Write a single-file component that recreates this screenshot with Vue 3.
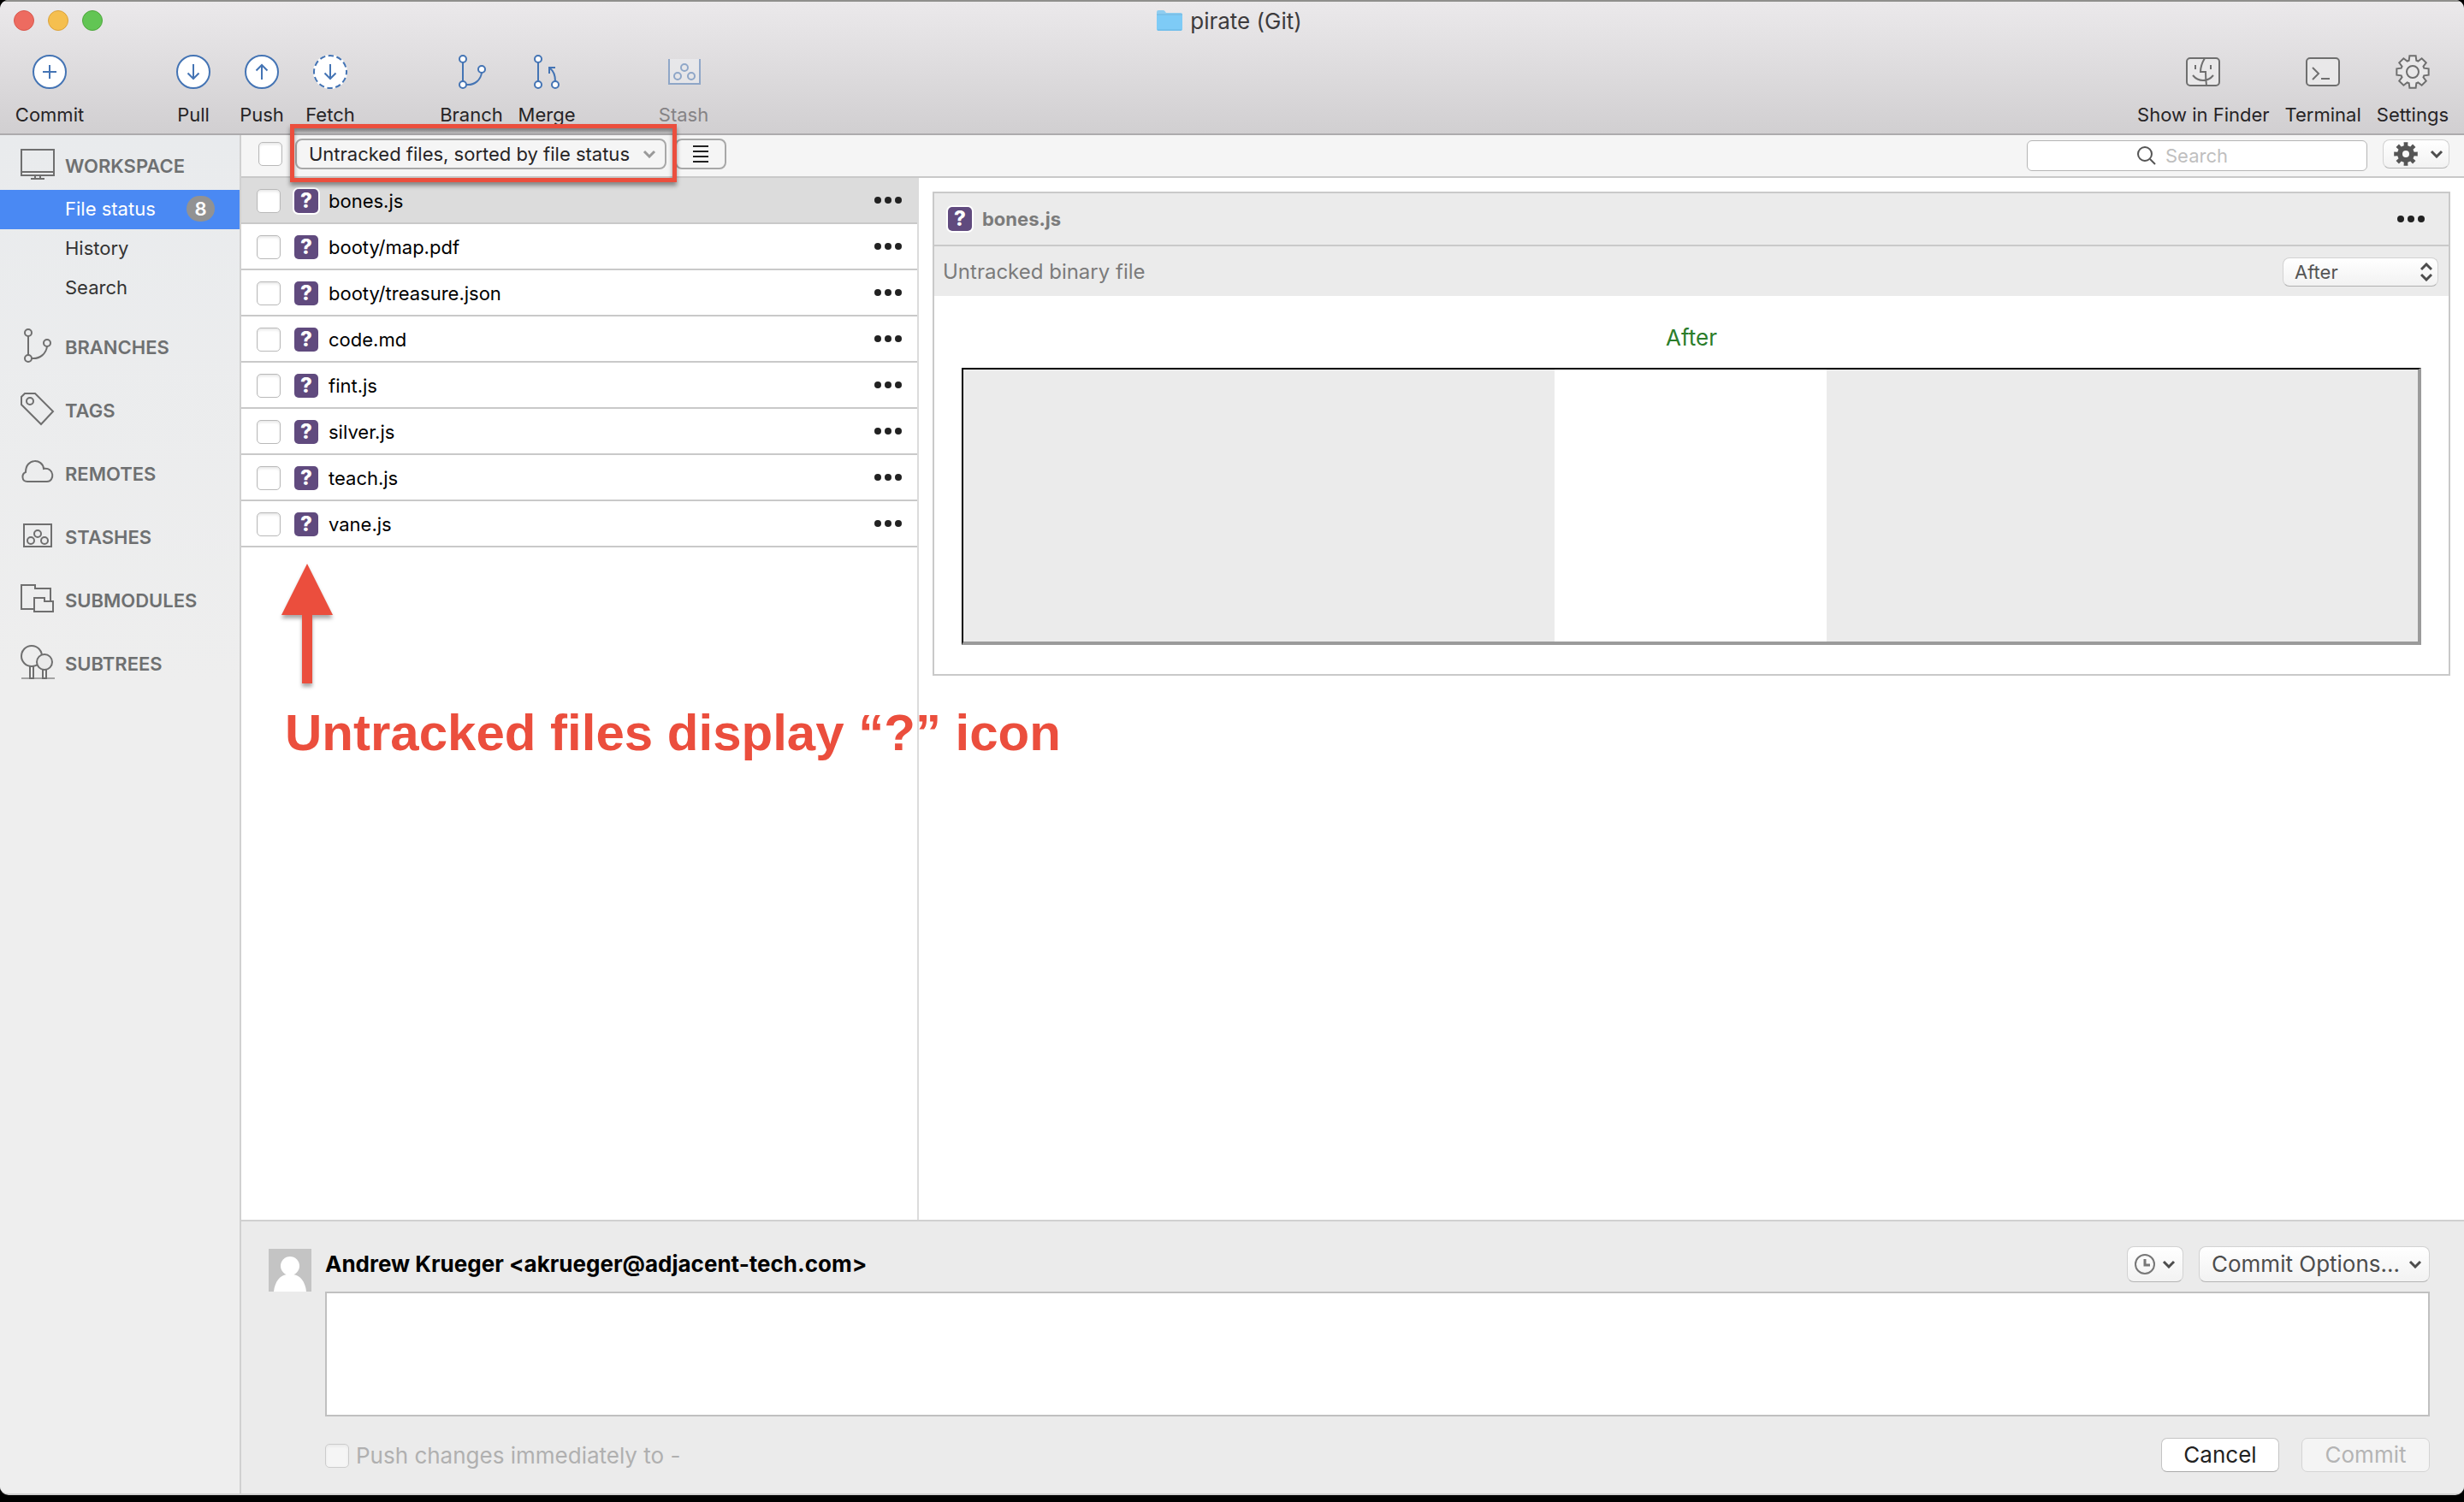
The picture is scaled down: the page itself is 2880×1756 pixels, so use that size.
<script setup>
import { ref } from 'vue'

const files = ref([
  'bones.js',
  'booty/map.pdf',
  'booty/treasure.json',
  'code.md',
  'fint.js',
  'silver.js',
  'teach.js',
  'vane.js',
].map((name) => ({ name, staged: false })))

const selected = ref('bones.js')
const allStaged = ref(false)
const query = ref('')
const message = ref('')

const sections = [
  { id: 'branches', label: 'BRANCHES' },
  { id: 'tags', label: 'TAGS' },
  { id: 'remotes', label: 'REMOTES' },
  { id: 'stashes', label: 'STASHES' },
  { id: 'submodules', label: 'SUBMODULES' },
  { id: 'subtrees', label: 'SUBTREES' },
]

// Outline of an eight-toothed gear centred on (c, c)
function gear(c, outer, inner, tip, root) {
  const points = []
  for (let i = 0; i < 8; i++) {
    const steps = [[inner, -root], [outer, -tip], [outer, tip], [inner, root]]
    for (const [r, offset] of steps) {
      const a = ((i * 45 + offset) * Math.PI) / 180
      points.push(`${(c + r * Math.sin(a)).toFixed(2)} ${(c - r * Math.cos(a)).toFixed(2)}`)
    }
  }
  return `M${points.join('L')}Z`
}
const outlineGear = gear(20, 19, 14, 11, 18)
const solidGear = gear(14, 14, 10, 10, 13)
</script>

<template>
  <div class="desktop">
    <div class="window">
      <header class="chrome">
        <div class="titlebar">
          <div class="lights">
            <button class="light close" aria-label="Close"></button>
            <button class="light minimise" aria-label="Minimise"></button>
            <button class="light zoom" aria-label="Zoom"></button>
          </div>
          <h1 class="title">
            <svg class="folder" width="30" height="26" viewBox="0 0 30 26">
              <path d="M0 2Q0 0 2 0H8Q9 0 11 3H28Q30 3 30 5V23H0Z" fill="#8fcdf0" />
              <path d="M0 6H30V22Q30 24 28 24H2Q0 24 0 22Z" fill="#7ecbf6" />
              <path d="M0 5H30M1 23H29" stroke="#68b4e0" fill="none" />
            </svg>
            pirate (Git)
          </h1>
        </div>

        <div class="toolbar">
          <div class="tools blue">
            <div class="group">
              <button class="tool">
                <svg class="icon" viewBox="0 0 40 40"><circle cx="20" cy="20" r="19" fill="#fff" /><path d="M20 12V28M12 20H28" /></svg>
                Commit
              </button>
            </div>
            <div class="group sync">
              <button class="tool">
                <svg class="icon" viewBox="0 0 40 40"><circle cx="20" cy="20" r="19" fill="#fff" /><path d="M20 11V28M13.500 21.500L20 28L26.500 21.500" /></svg>
                Pull
              </button>
              <button class="tool">
                <svg class="icon" viewBox="0 0 40 40"><circle cx="20" cy="20" r="19" fill="#fff" /><path d="M20 29V12M13.500 18.500L20 12L26.500 18.500" /></svg>
                Push
              </button>
              <button class="tool">
                <svg class="icon" viewBox="0 0 40 40"><circle cx="20" cy="20" r="20" fill="#fff" stroke="none" /><circle cx="20" cy="20" r="19" stroke-dasharray="6.500 3.450" stroke-dashoffset="3" /><path d="M20 11V28M13.500 21.500L20 28L26.500 21.500" /></svg>
                Fetch
              </button>
            </div>
            <div class="group flow">
              <button class="tool">
                <svg class="icon" viewBox="0 0 40 40"><path d="M10 9V31M14 35C24 36 31 29 32 21" /><g fill="#fff"><circle cx="10" cy="5" r="4" /><circle cx="10" cy="35" r="4" /><circle cx="32" cy="17" r="4" /></g></svg>
                Branch
              </button>
              <button class="tool">
                <svg class="icon" viewBox="0 0 40 40"><path d="M10 9V31M30 31C30 24 28 19 24 16M23 22V15H30" /><g fill="#fff"><circle cx="10" cy="5" r="4" /><circle cx="10" cy="35" r="4" /><circle cx="30" cy="35" r="4" /></g></svg>
                Merge
              </button>
            </div>
            <div class="group shelf">
              <button class="tool" disabled>
                <svg class="icon" viewBox="0 0 40 40"><path d="M3 5V34H39V5" fill="#f0f2f5" /><circle cx="21" cy="15" r="4" /><circle cx="13" cy="25" r="4" /><circle cx="29" cy="25" r="4" /></svg>
                Stash
              </button>
            </div>
          </div>
          <div class="tools end">
            <button class="tool">
              <svg class="icon" viewBox="0 0 40 40"><rect x="1" y="4" width="38" height="32" rx="4" fill="#e9e8e9" /><path d="M11 12V17M29 12V17M22 4C19 9 17 14 17 20H23Q23 28 24 36M8 24Q13 30 20 30T32 24" /></svg>
              Show in Finder
            </button>
            <button class="tool">
              <svg class="icon" viewBox="0 0 40 40"><rect x="1" y="4" width="38" height="32" rx="4" fill="#e9e8e9" /><path d="M8 15L15 22L8 29M18 28H28" /></svg>
              Terminal
            </button>
            <button class="tool">
              <svg class="icon" viewBox="0 0 40 40"><path :d="outlineGear" fill="#e9e8e9" /><circle cx="20" cy="20" r="7" /></svg>
              Settings
            </button>
          </div>
        </div>
      </header>

      <div class="body">
        <nav class="sidebar">
          <h2 class="section first">
            <svg class="icon" viewBox="0 0 40 40"><rect x="1" y="1" width="38" height="30" /><path d="M1 27H39M17 31V35M23 31V35M12 35H28" /></svg>
            WORKSPACE
          </h2>
          <a class="entry active" href="#status">File status <span class="badge">8</span></a>
          <a class="entry" href="#history">History</a>
          <a class="entry" href="#search">Search</a>
          <div class="sections">
            <h2 v-for="s in sections" :key="s.id" class="section">
              <svg class="icon" viewBox="0 0 40 40">
                <template v-if="s.id === 'branches'"><path d="M9 7V29M13 33C23 34 30 27 31 19" /><circle cx="9" cy="3" r="4" /><circle cx="9" cy="33" r="4" /><circle cx="31" cy="15" r="4" /></template>
                <template v-else-if="s.id === 'tags'"><path d="M5 0H17L38 21L24 36L1 13V4Z" /><circle cx="11" cy="9" r="4" /></template>
                <path v-else-if="s.id === 'remotes'" d="M8 29C1 29 1 20 6 18C6 1 26 2 27 14C40 12 40 29 31 29Z" />
                <template v-else-if="s.id === 'stashes'"><rect x="4" y="5" width="32" height="26" /><circle cx="20" cy="16" r="4" /><circle cx="12" cy="24" r="4" /><circle cx="28" cy="24" r="4" /></template>
                <path v-else-if="s.id === 'submodules'" d="M16 30H1V2H17V6H35V21M16 17H28V21H38V33H16Z" />
                <template v-else><path d="M1 37H40" opacity="0.600" /><circle cx="13" cy="11" r="12" /><path d="M11 23V37H15V23M26 27V37H30V27" /><circle cx="28" cy="18" r="9" fill="#eaeaea" /></template>
              </svg>
              {{ s.label }}
            </h2>
          </div>
        </nav>

        <main class="main">
          <div class="filterbar">
            <input v-model="allStaged" class="check" type="checkbox" aria-label="Stage all files" />
            <div class="picker filter">
              <select aria-label="File filter">
                <option>Untracked files, sorted by file status</option>
              </select>
              <svg width="16" height="10" viewBox="0 0 16 10"><path d="M2 2L8 8L14 2" /></svg>
            </div>
            <button class="listmode" aria-label="List style">
              <svg width="18" height="20" viewBox="0 0 18 20"><path d="M0 1H18M0 7H18M0 13H18M0 19H18" stroke="#222" stroke-width="2" /></svg>
            </button>
            <label class="search">
              <svg width="22" height="22" viewBox="0 0 22 22"><circle cx="9" cy="9" r="8" /><path d="M15 15L21 21" /></svg>
              <input v-model="query" type="text" placeholder="Search" aria-label="Search" />
            </label>
            <button class="soft options" aria-label="View options">
              <svg width="28" height="28" viewBox="0 0 28 28"><path :d="solidGear" fill="#555" /><circle cx="14" cy="14" r="4" fill="#f8f8f8" /></svg>
              <svg class="chevron" width="16" height="10" viewBox="0 0 16 10"><path d="M2 2L8 8L14 2" /></svg>
            </button>
            <div class="callout"></div>
          </div>

          <div class="panes">
            <section class="files">
              <ul>
                <li v-for="f in files" :key="f.name" class="file" :class="{ selected: f.name === selected }">
                  <label>
                    <input v-model="f.staged" class="check" type="checkbox" />
                    <span class="mark">?</span>
                    {{ f.name }}
                  </label>
                  <button class="more" :aria-label="`Actions for ${f.name}`">
                    <svg width="32" height="8" viewBox="0 0 32 8"><circle cx="4" cy="4" r="4" /><circle cx="16" cy="4" r="4" /><circle cx="28" cy="4" r="4" /></svg>
                  </button>
                </li>
              </ul>
              <div class="note">
                <svg width="60" height="142" viewBox="0 0 60 142"><path d="M30 0L60 60H36V140H24V60H0Z" fill="#eb4e3d" /></svg>
                <p>Untracked files display “?” icon</p>
              </div>
            </section>

            <section class="detail">
              <article class="diff">
                <header class="diffhead">
                  <span class="mark ringed">?</span>
                  <h3>{{ selected }}</h3>
                  <button class="more" aria-label="File actions">
                    <svg width="32" height="8" viewBox="0 0 32 8"><circle cx="4" cy="4" r="4" /><circle cx="16" cy="4" r="4" /><circle cx="28" cy="4" r="4" /></svg>
                  </button>
                </header>
                <div class="diffsub">
                  <span>Untracked binary file</span>
                  <div class="picker version">
                    <select aria-label="Version"><option>After</option></select>
                    <svg width="14" height="22" viewBox="0 0 14 22"><path d="M1 8L7 2L13 8M1 14L7 20L13 14" /></svg>
                  </div>
                </div>
                <figure>
                  <figcaption>After</figcaption>
                  <div class="preview"><div class="image"></div></div>
                </figure>
              </article>
            </section>
          </div>

          <form class="commit" @submit.prevent>
            <svg class="avatar" width="50" height="50" viewBox="0 0 50 50"><rect width="50" height="50" fill="#c4c4c4" /><ellipse cx="25" cy="20" rx="11" ry="11" fill="#fff" /><path d="M6 50C7 39 13 31 21 30H29C37 31 43 39 44 50Z" fill="#fff" /></svg>
            <div class="author">
              <strong>Andrew Krueger &lt;akrueger@adjacent-tech.com&gt;</strong>
              <button type="button" class="soft recent" aria-label="Recent messages">
                <svg width="24" height="24" viewBox="0 0 24 24" fill="none" stroke="#777" stroke-width="2"><circle cx="12" cy="12" r="11" /><path d="M12 6V13H18" stroke-width="3" /></svg>
                <svg class="chevron" width="16" height="10" viewBox="0 0 16 10"><path d="M2 2L8 8L14 2" /></svg>
              </button>
              <button type="button" class="soft choices">
                Commit Options...
                <svg class="chevron" width="16" height="10" viewBox="0 0 16 10"><path d="M2 2L8 8L14 2" /></svg>
              </button>
            </div>
            <textarea v-model="message" aria-label="Commit message"></textarea>
            <div class="actions">
              <label class="push"><input class="check" type="checkbox" disabled /> Push changes immediately to -</label>
              <button type="button" class="action cancel">Cancel</button>
              <button class="action submit" disabled>Commit</button>
            </div>
          </form>
        </main>
      </div>
    </div>
  </div>
</template>

<style>
body {
  margin: 0;
  background: #000;
}
</style>

<style scoped>
* {
  box-sizing: border-box;
}
.desktop {
  display: flex;
  min-height: 100vh;
  padding-bottom: 8px;
  background: #000;
  color: #262426;
  font-family: Inter, "Liberation Sans", sans-serif;
  font-size: 22px;
  line-height: 28px;
}
button,
input,
select,
textarea {
  margin: 0;
  padding: 0;
  border: 0;
  background: none;
  color: inherit;
  font: inherit;
}
h1,
h2,
h3,
p,
ul,
figure {
  margin: 0;
  padding: 0;
  font: inherit;
}
ul {
  list-style: none;
}
svg {
  flex: none;
  display: block;
}
.window {
  flex: 1;
  display: flex;
  flex-direction: column;
  min-width: 0;
  border-bottom: 2px solid #d0d0d0;
  border-radius: 10px;
  background: #ebebeb;
  overflow: hidden;
}

/* title bar and toolbar */
.chrome {
  border-top: 2px solid #8f8f8c;
  border-bottom: 2px solid #adabad;
  background: linear-gradient(#ebe9eb, #d1cfd1);
}
.titlebar {
  display: grid;
  grid-template-columns: 1fr auto 1fr;
  align-items: center;
  height: 44px;
  padding: 0 22px 0 16px;
}
.lights {
  display: flex;
  gap: 16px;
}
.light {
  width: 24px;
  height: 24px;
  border-radius: 50%;
}
.close {
  border: 1px solid #d8574d;
  background: #ed6b60;
}
.minimise {
  border: 1px solid #dba23c;
  background: #f5bf4f;
}
.zoom {
  border: 1px solid #4fa73d;
  background: #62c554;
}
.title {
  display: flex;
  align-items: center;
  gap: 9px;
  padding-top: 2px;
  color: #3d3b3d;
  font-size: 26px;
}
.toolbar {
  display: flex;
  justify-content: space-between;
  padding: 18px 18px 8px 18px;
}
.tools,
.group {
  display: flex;
}
.tool {
  display: flex;
  flex-direction: column;
  align-items: center;
  gap: 16px;
}
.group .tool {
  width: 80px;
}
.group.sync {
  margin-left: 88px;
}
.group.flow {
  margin-left: 81px;
}
.group.flow .tool {
  width: 88px;
}
.group.shelf {
  margin-left: 76px;
}
.tool:disabled {
  color: #858385;
}
.tool:disabled .icon {
  opacity: 0.5;
}
.tools.end {
  gap: 18px;
}
.icon {
  width: 40px;
  height: 40px;
  overflow: visible;
  fill: none;
  stroke: #6f6f6f;
  stroke-width: 2;
}
.blue .icon {
  stroke: #4474b4;
}

/* sidebar */
.body {
  flex: 1;
  display: flex;
}
.sidebar {
  flex: none;
  width: 282px;
  border-right: 2px solid #d0d0d0;
  background: linear-gradient(#e9ebed, #eeeeee 640px);
}
.section {
  display: flex;
  align-items: center;
  gap: 12px;
  height: 74px;
  padding-left: 24px;
  color: #6e7071;
  font-weight: 600;
}
.section.first {
  height: 64px;
  padding-top: 8px;
}
.sections {
  padding-top: 9px;
}
.entry {
  display: flex;
  align-items: center;
  height: 46px;
  padding: 0 29px 2px 76px;
  color: #333;
  text-decoration: none;
}
.entry.active {
  justify-content: space-between;
  background: #4a89f3;
  color: #fff;
}
.badge {
  width: 33px;
  border-radius: 15px;
  background: #929292;
  font-weight: 600;
  line-height: 30px;
  text-align: center;
}

/* filter bar */
.main {
  flex: 1;
  display: flex;
  flex-direction: column;
  min-width: 0;
}
.filterbar {
  position: relative;
  z-index: 1;
  display: flex;
  align-items: center;
  height: 50px;
  padding: 0 17px 4px 20px;
  border-bottom: 2px solid #c9c9c9;
  background: #f5f5f5;
}
.check {
  flex: none;
  appearance: none;
  width: 28px;
  height: 28px;
  border: 1px solid #b9b9b9;
  border-radius: 5px;
  background: #fff;
  box-shadow: inset 0 2px 3px #e8e8e8;
}
.picker {
  display: grid;
  align-items: center;
}
.picker select {
  grid-area: 1 / 1;
  appearance: none;
  width: 100%;
  height: 100%;
}
.picker svg {
  grid-area: 1 / 1;
  justify-self: end;
  fill: none;
  pointer-events: none;
}
.filter {
  width: 434px;
  height: 36px;
  margin-left: 15px;
}
.filter select {
  padding-left: 14px;
  border: 2px solid #a8a8a8;
  border-radius: 8px;
}
.filter svg {
  margin-right: 12px;
  stroke: #999;
  stroke-width: 3;
}
.listmode {
  display: grid;
  place-items: center;
  width: 60px;
  height: 36px;
  margin-left: 10px;
  border: 2px solid #a8a8a8;
  border-radius: 8px;
}
.search {
  display: flex;
  align-items: center;
  gap: 11px;
  width: 398px;
  height: 36px;
  margin: 4px 0 0 auto;
  padding-left: 128px;
  border: 1px solid #b5b5b5;
  border-radius: 6px;
  background: #fff;
}
.search svg {
  fill: none;
  stroke: #555;
  stroke-width: 2;
}
.search input {
  flex: 1;
  min-width: 0;
  outline: 0;
}
.search input::placeholder {
  color: #bfbfbf;
  opacity: 1;
}
.soft {
  display: flex;
  align-items: center;
  border: 1px solid #d2d2d2;
  border-bottom-color: #b5b5b5;
  border-radius: 8px;
  background: linear-gradient(#fff, #f2f2f2);
  color: #4d4d4d;
}
.chevron {
  fill: none;
  stroke: #4d4d4d;
  stroke-width: 3;
}
.options {
  gap: 14px;
  height: 34px;
  margin-left: 18px;
  padding: 0 6px 0 12px;
}
.callout {
  position: absolute;
  top: -13px;
  left: 57px;
  width: 452px;
  height: 68px;
  border: 5px solid #eb4e3d;
  box-shadow: 0 4px 5px #0006, inset 0 4px 5px #0006;
  pointer-events: none;
}

/* file list */
.panes {
  flex: 1;
  display: grid;
  grid-template-columns: 792px 1fr;
  background: #fff;
}
.files {
  position: relative;
  border-right: 2px solid #dcdcdc;
}
.file {
  display: flex;
  align-items: center;
  height: 54px;
  padding: 0 18px;
  border-bottom: 2px solid #c9c9c9;
  color: #000;
}
.file.selected {
  background: #dcdcdc;
}
.file label {
  flex: 1;
  display: flex;
  align-items: center;
  padding-top: 2px;
}
.mark {
  flex: none;
  width: 28px;
  margin: 0 12px 0 16px;
  border-radius: 5px;
  background: #604a7e;
  color: #fff;
  font-size: 24px;
  font-weight: 800;
  text-align: center;
}
.selected .mark,
.ringed {
  box-shadow: 0 0 0 2px #fff;
}
.more {
  padding: 10px 0;
}
.more svg {
  fill: #222;
}
.note {
  position: absolute;
  top: 451px;
  left: 47px;
  color: #eb4e3d;
  font: bold 60px/68px "Liberation Sans", Arial, sans-serif;
  white-space: nowrap;
}
.note svg {
  overflow: visible;
  filter: drop-shadow(0 4px 2px #0005);
}
.note p {
  padding: 22px 0 0 4px;
}

/* file detail */
.detail {
  padding: 16px;
}
.diff {
  border: 2px solid #c9c9c9;
}
.diffhead {
  display: flex;
  align-items: center;
  height: 62px;
  padding-right: 28px;
  border-bottom: 2px solid #c9c9c9;
  background: #ebebeb;
  color: #7b7b7b;
}
.diffhead h3 {
  flex: 1;
  font-weight: 700;
}
.diffsub {
  display: flex;
  align-items: center;
  justify-content: space-between;
  height: 58px;
  padding: 2px 12px 0 10px;
  background: #ebebeb;
  color: #7b7b7b;
  font-size: 24px;
}
.version {
  width: 182px;
  height: 34px;
  color: #555;
  font-size: 22px;
}
.version select {
  padding-left: 13px;
  border: 1px solid #d2d2d2;
  border-bottom-color: #b0b0b0;
  border-radius: 8px;
  background: linear-gradient(#fff, #f2f2f2);
}
.version svg {
  margin-right: 7px;
  stroke: #4d4d4d;
  stroke-width: 3;
}
.diff figure {
  padding: 35px 32px 34px;
}
figcaption {
  color: #2b7d2b;
  font-size: 26px;
  text-align: center;
}
.preview {
  display: flex;
  justify-content: center;
  margin-top: 21px;
  border: solid #9b9b9b;
  border-width: 2px 4px 4px 2px;
  border-top-color: #000;
  border-left-color: #000;
  background: #ebebeb;
}
.image {
  width: 318px;
  aspect-ratio: 1;
  background: #fff;
}

/* commit form */
.commit {
  display: grid;
  grid-template-columns: 50px 1fr;
  column-gap: 16px;
  padding: 28px 40px 25px 32px;
  border-top: 2px solid #d0d0d0;
  background: #ebebeb;
  font-size: 26px;
}
.avatar {
  margin-top: 4px;
}
.author {
  display: flex;
  align-items: center;
  height: 42px;
  padding-top: 2px;
}
.author strong {
  flex: 1;
  color: #000;
  font-weight: 700;
}
.author .soft {
  height: 42px;
}
.recent {
  gap: 8px;
  padding: 0 8px;
}
.choices {
  gap: 10px;
  margin-left: 18px;
  padding: 0 8px 0 14px;
}
textarea {
  grid-column: 2;
  height: 146px;
  border: 2px solid #c0c0c0;
  background: #fff;
  resize: none;
}
.actions {
  grid-column: 2;
  display: flex;
  align-items: center;
  margin-top: 25px;
}
.push {
  flex: 1;
  display: flex;
  align-items: center;
  gap: 8px;
  padding-top: 2px;
  color: #b0b0b0;
}
.push .check {
  border-color: #ccc;
  background: #f5f5f5;
}
.action {
  height: 40px;
  border: 1px solid #c4c4c4;
  border-bottom-color: #aaa;
  border-radius: 7px;
  background: #fff;
  color: #222;
}
.cancel {
  width: 138px;
}
.submit {
  width: 150px;
  margin-left: 26px;
  border-color: #d4d4d4;
  background: #f4f4f4;
  color: #b4b4b4;
}
</style>
